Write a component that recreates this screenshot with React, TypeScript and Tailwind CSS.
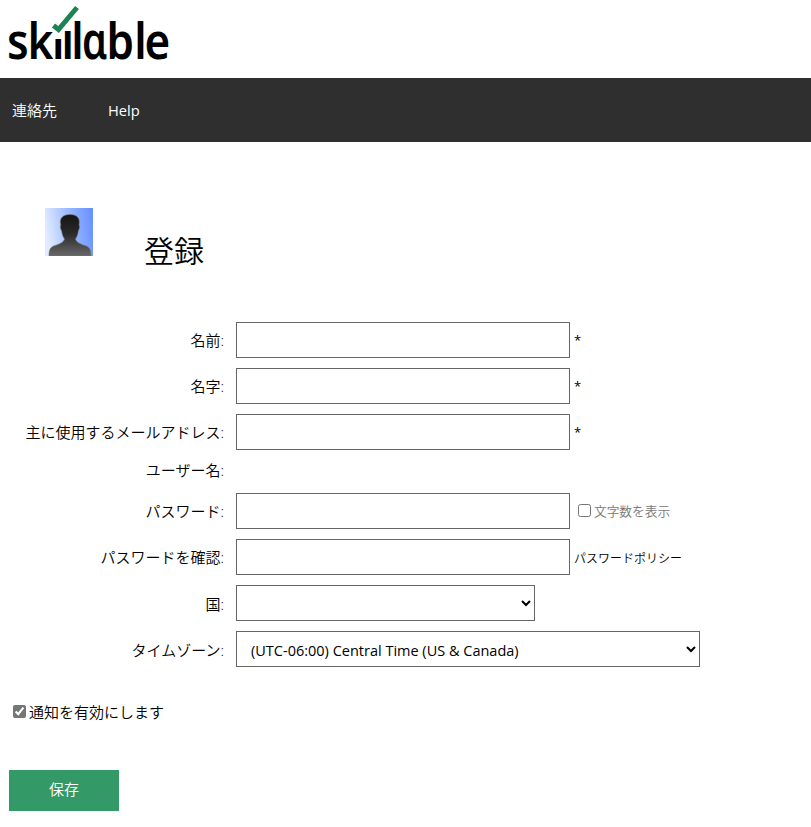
import type { ReactNode } from 'react';

const runs = [
  { text: 'skill', x: '8 31.2 59.2 69.8 81', scale: 'scale(0.88 1)' },
  { text: 'ɑ', x: '103.8', scale: 'scale(0.79 1)' },
  { text: 'ble', x: '121 152.5 164.3', scale: 'scale(0.88 1)' },
];

function Logo() {
  return (
    <svg className="block overflow-visible" width="172" height="66" viewBox="0 0 172 66" role="img" aria-label="skillable">
      {runs.map(({ text, x, scale }) => (
        <text
          key={text}
          transform={scale}
          x={x}
          y="59"
          fontSize="50"
          fontWeight="600"
          fontFamily="'Noto Sans', 'Open Sans', sans-serif"
        >
          {text}
        </text>
      ))}
      <path d="M52 0H71.500V31H62V39H53V31H52Z" fill="#fff" />
      <path d="M53.500 25.500L58.500 29.500L77 7.500" fill="none" stroke="#1d8353" strokeWidth="5" />
    </svg>
  );
}

function Avatar() {
  return (
    <svg className="block" width="48" height="48" viewBox="0 0 48 48">
      <defs>
        <linearGradient id="sky" x1="0" y1=".35" x2="1" y2=".2">
          <stop stopColor="#e2ecff" />
          <stop offset=".5" stopColor="#9bbaff" />
          <stop offset="1" stopColor="#6790ff" />
        </linearGradient>
        <linearGradient id="person" x1="0" y1="0" x2="0" y2="1">
          <stop stopColor="#151515" />
          <stop offset=".45" stopColor="#292929" />
          <stop offset="1" stopColor="#676767" />
        </linearGradient>
      </defs>
      <path fill="url(#sky)" d="M0 0H48V48H0Z" />
      <path
        fill="url(#person)"
        stroke="#777"
        strokeWidth=".6"
        d="M4 48C4 42 5 39 10 37.500C15 36 19 34 19.500 31C18 29 17 26 16.700 23C15.300 21 15 18 15.800 17C14 10 18 6.500 25 6.500C32 6.500 35.500 10 34 17C35 18 34.500 21 33.300 23C33 26 32 29 30.500 31C31 34 35 36 40 37.500C45 39 46 42 46 48Z"
      />
    </svg>
  );
}

function Row({ label, className, children }: { label: string; className: string; children?: ReactNode }) {
  return (
    <div className={`flex items-center ${className}`}>
      <div className="w-56 shrink-0 text-right text-[15px] whitespace-nowrap">{label}</div>
      <div className="ml-3 flex items-center">{children}</div>
    </div>
  );
}

const field = 'h-9 border border-[#666] bg-white rounded-none';

export default function App() {
  return (
    <div className="min-h-[827px] w-full bg-white font-['Open_Sans','Noto_Sans_CJK_JP',sans-serif] font-[350] text-black">
      <header className="h-[78px]">
        <Logo />
      </header>
      <nav className="flex h-16 items-center bg-[#2f2f2f] pl-3 text-[15px] text-white">
        <a className="w-24">連絡先</a>
        <a className="text-[14.7px] font-normal">Help</a>
      </nav>
      <div className="flex h-[180px] pt-[66px] pl-[45px]">
        <Avatar />
        <h1 className="mt-[21px] ml-[51px] text-[30px] leading-[44px]">登録</h1>
      </div>
      <form>
        <Row label="名前:" className="mb-2.5 h-9">
          <input className={`${field} w-[334px]`} />
          <span className="ml-1 pt-0.5 text-[13px] font-normal">*</span>
        </Row>
        <Row label="名字:" className="mb-2.5 h-9">
          <input className={`${field} w-[334px]`} />
          <span className="ml-1 pt-0.5 text-[13px] font-normal">*</span>
        </Row>
        <Row label="主に使用するメールアドレス:" className="h-9">
          <input className={`${field} w-[334px]`} />
          <span className="ml-1 pt-0.5 text-[13px] font-normal">*</span>
        </Row>
        <Row label="ユーザー名:" className="h-[43px] pb-0.5" />
        <Row label="パスワード:" className="mb-2.5 h-9">
          <input className={`${field} w-[334px]`} />
          <label className="ml-2 flex items-center text-[12.7px] text-[#777]">
            <input type="checkbox" className="mr-[3px] h-[13px] w-[13px]" />
            <span className="pt-0.5">文字数を表示</span>
          </label>
        </Row>
        <Row label="パスワードを確認:" className="mb-2.5 h-9">
          <input className={`${field} w-[334px]`} />
          <a className="ml-1 pt-[3px] text-[12px]">パスワードポリシー</a>
        </Row>
        <Row label="国:" className="mb-2.5 h-9 [&>div:first-child]:pt-0.5">
          <select className={`${field} w-[299px] px-[9px]`}>
            <option></option>
          </select>
        </Row>
        <Row label="タイムゾーン:" className="h-9 [&>div:first-child]:pt-0.5">
          <select className={`${field} w-[464px] px-[9px] pl-2.5 pt-0.5 text-[14.5px] font-normal`}>
            <option>(UTC-06:00) Central Time (US &amp; Canada)</option>
          </select>
        </Row>
        <label className="mt-[34px] ml-[13px] flex h-[22px] items-center text-[15px]">
          <input type="checkbox" defaultChecked className="mr-[3px] mb-0.5 h-[13px] w-[13px] accent-[#767676]" />
          通知を有効にします
        </label>
        <button type="button" className="mt-[47px] ml-[9px] block h-[41px] w-[110px] bg-[#339966] pb-0.5 text-[15px] text-white">
          保存
        </button>
      </form>
    </div>
  );
}
